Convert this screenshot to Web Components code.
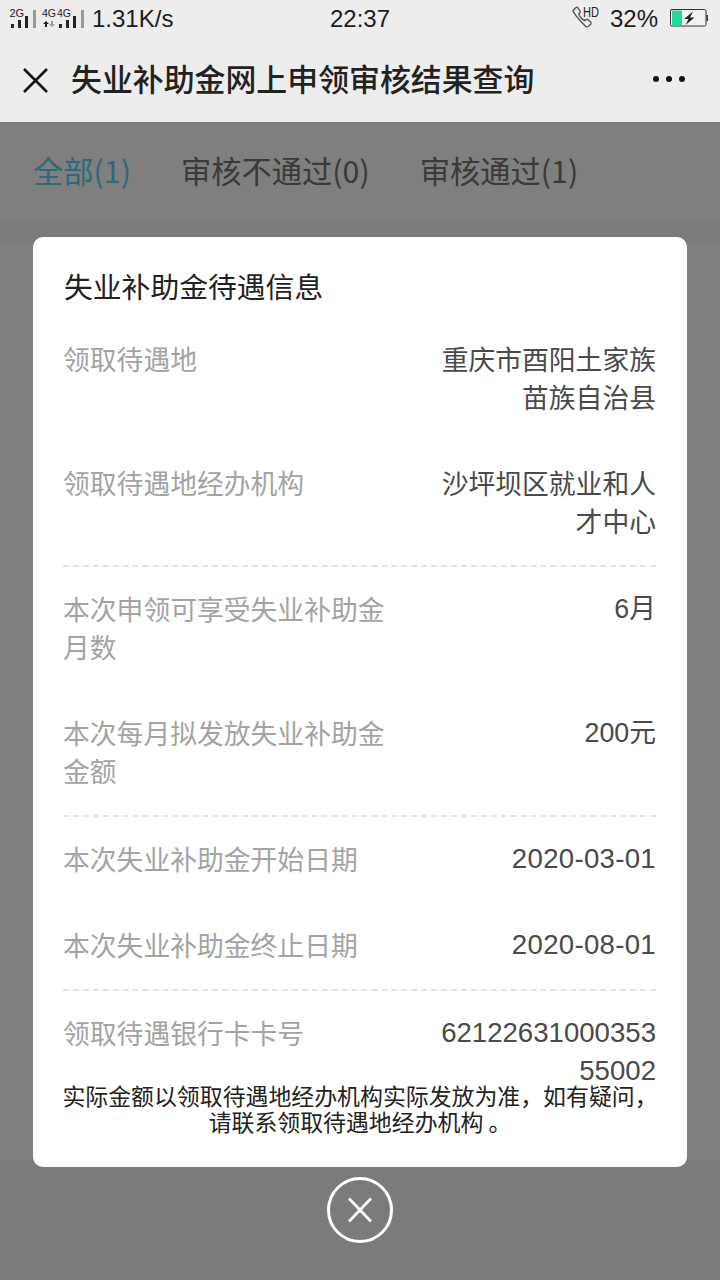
<!DOCTYPE html>
<html lang="zh">
<head>
<meta charset="utf-8">
<title>失业补助金网上申领审核结果查询</title>
<style>
    html, body { margin: 0; padding: 0; }
    body { width: 720px; height: 1280px; overflow: hidden; font-family: "Noto Sans CJK SC", "Noto Sans", sans-serif; }
</style>
</head>
<body>
<result-page></result-page>

<script>
class StatusBar extends HTMLElement {
    constructor() {
        super();
        this.attachShadow({ mode: "open" });
        this.shadowRoot.innerHTML = `
            <style>
                :host { display: flex; align-items: center; height: 38px; background: #ededed; color: #1c1c1c; font-family: "Liberation Sans", Arial, sans-serif; font-size: 24px; }
                .left, .right { flex: 1; display: flex; align-items: center; }
                .right { justify-content: flex-end; }
                .time { width: 60px; text-align: center; }
                .speed { margin-left: 3px; }
                svg { display: block; }
                svg text { font-family: "Liberation Sans", Arial, sans-serif; }
                .pct { margin: 0 12px 0 6px; }
                .battery { margin-right: 12px; }
            </style>
            <div class="left">
                <svg width="89" height="36" viewBox="0 0 89 36">
                    <text x="9.500" y="15.500" font-size="11" fill="#222">2G</text>
                    <g fill="#222">
                        <rect x="11" y="23" width="3" height="4"/><rect x="18" y="19" width="3" height="8"/><rect x="25" y="15" width="3" height="12"/>
                        <text x="42" y="15.500" font-size="10.500">4G</text><text x="57" y="15.500" font-size="10.500">4G</text>
                        <path d="M46 20l3 3h-2v3h-2v-3h-2z"/>
                        <rect x="59" y="23" width="3" height="4"/><rect x="66" y="19" width="3" height="8"/><rect x="73" y="15" width="3" height="12"/>
                    </g>
                    <path d="M52 26l-3-3h2v-3h2v3h2z" fill="#999"/>
                    <rect x="33" y="9" width="3" height="18" fill="#999"/>
                    <rect x="81" y="9" width="3" height="18" fill="#999"/>
                </svg>
                <span class="speed">1.31K/s</span>
            </div>
            <span class="time">22:37</span>
            <div class="right">
                <svg width="33" height="30" viewBox="0 0 33 30">
                    <path transform="translate(0 -4) scale(1.080)" d="M2.500 11.500c-.8-1-.6-2 .3-2.800l1.900-1.700c.6-.5 1.300-.4 1.700.2l2 3c.4.6.3 1.200-.2 1.700l-1 1c.8 2.300 3.300 5 5.600 6.200l1.200-1c.5-.4 1.200-.4 1.700.1l2.500 2.500c.5.500.5 1.200 0 1.700l-1.800 1.700c-.9.800-2 .9-3 .2C8.800 19.700 5.200 15.900 2.500 11.500z" fill="none" stroke="#555" stroke-width="1.300"/>
                    <text x="12" y="13" font-size="14" fill="#222" textLength="16" lengthAdjust="spacingAndGlyphs">HD</text>
                </svg>
                <span class="pct">32%</span>
                <svg class="battery" width="38" height="20" viewBox="0 0 38 20">
                    <rect x="0.500" y="0.500" width="35.500" height="16.500" rx="1.500" fill="#fff" fill-opacity=".3" stroke="#333"/>
                    <rect x="2" y="1.500" width="10" height="14.500" fill="#22dc96"/>
                    <path d="M23 2.500l-9 7.500h4.500l-3 6 9-7.500h-4.500l3-6z" fill="#222"/>
                    <rect x="36.500" y="6" width="1.500" height="6" fill="#333"/>
                </svg>
            </div>
        `;
    }
}
customElements.define("status-bar", StatusBar);

class NavBar extends HTMLElement {
    constructor() {
        super();
        this.attachShadow({ mode: "open" });
        this.shadowRoot.innerHTML = `
            <style>
                :host { display: flex; align-items: center; height: 84px; padding: 0 34px 0 23px; background: #ededed; color: #222; }
                svg { display: block; flex: none; }
                .dots { margin-top: -2px; }
                h1 { flex: 1; margin: 0 0 0 23px; padding-bottom: 4px; font-size: 30.900px; font-weight: 500; line-height: 44px; white-space: nowrap; }
            </style>
            <svg width="25" height="25" viewBox="0 0 25 25"><path d="M1 1l23 23M24 1L1 24" stroke="#111" stroke-width="2.600" fill="none"/></svg>
            <h1><slot></slot></h1>
            <svg class="dots" width="34" height="8" viewBox="0 0 34 8" fill="#111"><circle cx="4" cy="4" r="3"/><circle cx="17" cy="4" r="3"/><circle cx="30" cy="4" r="3"/></svg>
        `;
    }
}
customElements.define("nav-bar", NavBar);

class TabItem extends HTMLElement {
    constructor() {
        super();
        this.attachShadow({ mode: "open" });
        this.shadowRoot.innerHTML = `
            <style>
                :host { display: block; color: #747474; font-size: 30.300px; line-height: 44px; white-space: nowrap; }
                :host([active]) { color: #5fd2fa; }
            </style>
            <slot></slot>
        `;
    }
}
customElements.define("tab-item", TabItem);

class InfoRow extends HTMLElement {
    constructor() {
        super();
        this.attachShadow({ mode: "open" });
        this.shadowRoot.innerHTML = `
            <style>
                :host { display: flex; justify-content: space-between; padding: 24px 0; font-size: 26.800px; line-height: 38px; }
                :host([divider]) { padding-bottom: 25px; margin-bottom: -1px; border-bottom: 2px dashed #e4e4e4; }
                .label { width: 340px; color: #a3a3a3; }
                .value { width: 225px; color: #4a4a4a; text-align: right; word-break: break-all; }
                :host([numeric]) .value { font-family: "Liberation Sans", "Noto Sans CJK SC", sans-serif; }
                :host([wide]) .value { font-size: 27.600px; }
            </style>
            <div class="label"><slot name="label"></slot></div>
            <div class="value"><slot name="value"></slot></div>
        `;
    }
}
customElements.define("info-row", InfoRow);

class InfoDialog extends HTMLElement {
    constructor() {
        super();
        this.attachShadow({ mode: "open" });
        this.shadowRoot.innerHTML = `
            <style>
                :host { display: block; position: relative; width: 654px; height: 930px; box-sizing: border-box; padding: 29px 31px 0 30px; background: #fff; border-radius: 10px; overflow: hidden; }
                h2 { margin: 0 0 10px 1px; font-size: 28.800px; font-weight: 400; line-height: 40px; color: #222; }
                .note { position: absolute; left: 0; right: 0; top: 845px; font-size: 22.900px; line-height: 26px; text-align: center; color: #222; }
            </style>
            <h2><slot name="title"></slot></h2>
            <slot></slot>
            <div class="note"><slot name="note"></slot></div>
        `;
    }
}
customElements.define("info-dialog", InfoDialog);

class CloseButton extends HTMLElement {
    constructor() {
        super();
        this.attachShadow({ mode: "open" });
        this.shadowRoot.innerHTML = `
            <style>
                :host { display: block; width: 66px; height: 66px; margin-top: 10px; }
                svg { display: block; }
            </style>
            <svg width="66" height="66" viewBox="0 0 66 66" fill="none" stroke="#fff">
                <circle cx="33" cy="33" r="31.500" stroke-width="3"/>
                <path d="M22 21.500l22 23M44 21.500l-22 23" stroke-width="2.800"/>
            </svg>
        `;
    }
}
customElements.define("close-button", CloseButton);

class ResultPage extends HTMLElement {
    constructor() {
        super();
        this.attachShadow({ mode: "open" });
        this.shadowRoot.innerHTML = `
            <style>
                :host { display: flex; flex-direction: column; position: relative; width: 720px; height: 1280px; background: #f6f6f6; overflow: hidden; }
                .tabs { display: flex; gap: 50px; align-items: center; box-sizing: border-box; height: 100px; padding: 0 0 4px 33px; background: #fff; }
                .gap { height: 20px; }
                .list { height: 918px; background: #fff; }
                .overlay { position: absolute; left: 0; right: 0; top: 122px; bottom: 0; display: flex; flex-direction: column; align-items: center; padding-top: 115px; background: rgba(0, 0, 0, .5); }
                .date { letter-spacing: .3px; }
            </style>
            <status-bar></status-bar>
            <nav-bar>失业补助金网上申领审核结果查询</nav-bar>
            <div class="tabs">
                <tab-item active>全部(1)</tab-item>
                <tab-item>审核不通过(0)</tab-item>
                <tab-item>审核通过(1)</tab-item>
            </div>
            <div class="gap"></div>
            <div class="list"></div>
            <div class="overlay">
                <info-dialog>
                    <span slot="title">失业补助金待遇信息</span>
                    <info-row><span slot="label">领取待遇地</span><span slot="value">重庆市酉阳土家族苗族自治县</span></info-row>
                    <info-row divider><span slot="label">领取待遇地经办机构</span><span slot="value">沙坪坝区就业和人才中心</span></info-row>
                    <info-row numeric><span slot="label">本次申领可享受失业补助金月数</span><span slot="value">6月</span></info-row>
                    <info-row numeric divider><span slot="label">本次每月拟发放失业补助金金额</span><span slot="value">200元</span></info-row>
                    <info-row numeric wide><span slot="label">本次失业补助金开始日期</span><span slot="value" class="date">2020-03-01</span></info-row>
                    <info-row numeric wide divider><span slot="label">本次失业补助金终止日期</span><span slot="value" class="date">2020-08-01</span></info-row>
                    <info-row numeric wide><span slot="label">领取待遇银行卡卡号</span><span slot="value">6212263100035355002</span></info-row>
                    <span slot="note">实际金额以领取待遇地经办机构实际发放为准，如有疑问，<br>请联系领取待遇地经办机构 。</span>
                </info-dialog>
                <close-button></close-button>
            </div>
        `;
    }
}
customElements.define("result-page", ResultPage);
</script>
</body>
</html>
